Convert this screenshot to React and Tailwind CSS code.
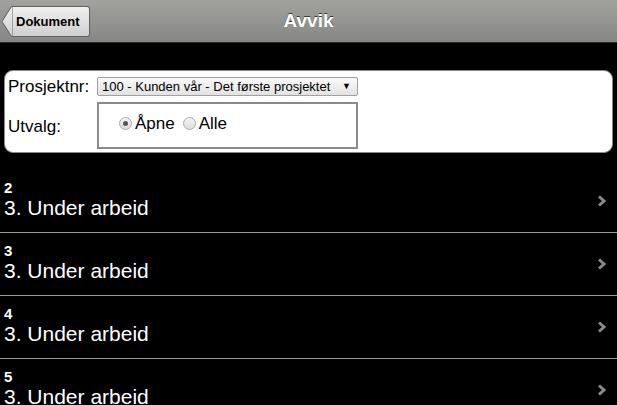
import React, { useState } from "react"

const rows = ["2", "3", "4", "5"]

const Chevron = () => (
    <svg width="10" height="12" viewBox="0 0 10 12" className="shrink-0">
        <path d="M2 1.5 L7 6 L2 10.5" fill="none" stroke="#8a8a8a" strokeWidth="3" />
    </svg>
)

const BackButton = () => (
    <div className="relative flex h-[31px] items-center">
        <svg width="12" height="31" viewBox="0 0 12 31" className="absolute left-0 top-0">
            <defs>
                <linearGradient id="bb" x1="0" y1="0" x2="0" y2="1">
                    <stop offset="0" stopColor="#f0f0f0" />
                    <stop offset="1" stopColor="#cfcfcf" />
                </linearGradient>
            </defs>
            <path d="M12 0.5 L10.5 0.5 L1 15.5 L10.5 30.5 L12 30.5 Z" fill="url(#bb)" stroke="#606060" strokeWidth="1" />
        </svg>
        <div className="ml-[11px] flex h-full items-center border border-l-0 border-[#606060] rounded-r-[3px] bg-gradient-to-b from-[#f0f0f0] to-[#cfcfcf] pl-[4px] pr-[9px] text-[13px] font-bold text-black">
            Dokument
        </div>
    </div>
)

const Radio = ({ checked }) => (
    <span className="mr-[3px] flex h-[13px] w-[13px] items-center justify-center rounded-full border border-[#aaa] bg-gradient-to-b from-[#f4f4f4] to-[#ddd]">
        {checked && <span className="h-[5px] w-[5px] rounded-full bg-[#555]" />}
    </span>
)

export default function App() {
    const [utvalg, setUtvalg] = useState("apne")

    return (
        <div className="min-h-screen bg-black font-[Liberation_Sans,Arial,sans-serif]">
            <header className="relative flex h-[43px] items-center justify-center border-b border-[#2a2a2a] bg-gradient-to-b from-[#a2a29f] to-[#868684]">
                <div className="absolute left-[1px] top-[6px]">
                    <BackButton />
                </div>
                <h1 className="text-[19px] font-bold text-white [text-shadow:0_-1px_0_#333]">Avvik</h1>
            </header>

            <div className="px-[4px] pt-[27px]">
                <div className="rounded-[9px] border border-[#888] bg-white px-[3px] pb-[3px] pt-[6px]">
                    <div className="flex h-[19px] items-center">
                        <span className="w-[89px] text-[17px] leading-[19px] text-black">Prosjektnr:</span>
                        <div className="flex h-[19px] w-[261px] items-center justify-between rounded-[2px] border border-[#a0a0a0] bg-gradient-to-b from-[#fafafa] to-[#e2e2e2] pl-[4px] pr-[6px] text-[13px] leading-[17px] text-black">
                            <span>100 - Kunden vår - Det første prosjektet</span>
                            <span className="text-[9px]">▼</span>
                        </div>
                    </div>
                    <div className="mt-[6px] flex h-[47px] items-center">
                        <span className="w-[89px] pt-[2px] text-[17px] leading-[19px] text-black">Utvalg:</span>
                        <div className="flex h-[47px] w-[261px] items-center border-2 border-[#8a8a8a] pb-[4px] pl-[20px] text-[17px] leading-[19px] text-black">
                            <label className="flex items-center" onClick={() => setUtvalg("apne")}>
                                <Radio checked={utvalg === "apne"} />
                                Åpne
                            </label>
                            <label className="ml-[8px] flex items-center" onClick={() => setUtvalg("alle")}>
                                <Radio checked={utvalg === "alle"} />
                                Alle
                            </label>
                        </div>
                    </div>
                </div>
            </div>

            <ul className="mt-[17px]">
                {rows.map((nr) => (
                    <li key={nr} className="flex h-[63px] items-center justify-between border-b border-[#999] pl-[4px] pr-[10px]">
                        <div className="flex flex-col pb-[3px] text-white">
                            <span className="text-[15px] font-bold leading-[17px]">{nr}</span>
                            <span className="text-[21px] leading-[24px]">3. Under arbeid</span>
                        </div>
                        <Chevron />
                    </li>
                ))}
            </ul>
        </div>
    )
}
